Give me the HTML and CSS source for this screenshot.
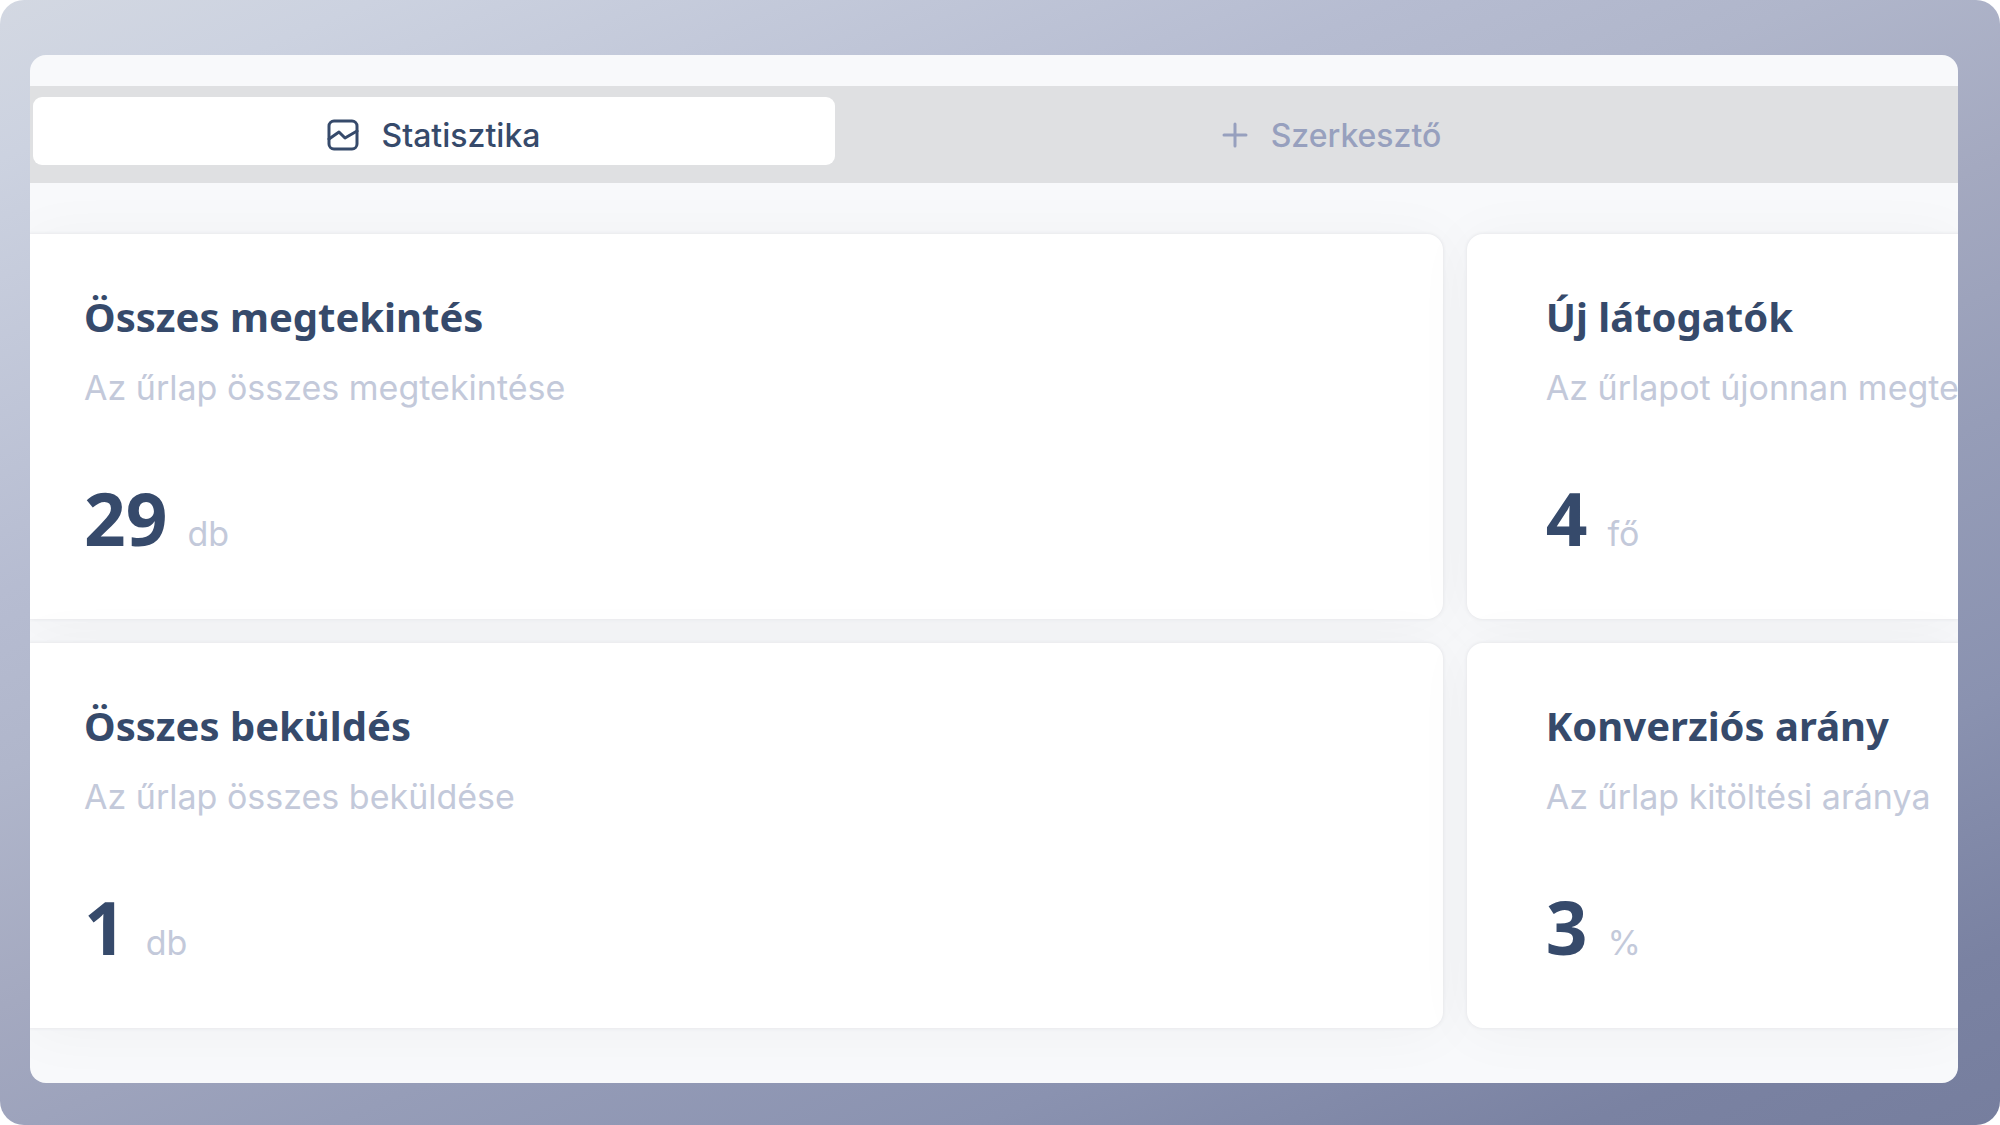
FILE: index.html
```html
<!DOCTYPE html>
<html lang="hu">

<head>
    <meta charset="UTF-8">
    <meta name="viewport" content="width=device-width, initial-scale=1.0">
    <title>Statisztika</title>
    <link rel="stylesheet" href="styles.css">
</head>

<body>
    <div class="frame">
        <main class="panel">
            <nav class="tabs">
                <button class="tab active" type="button">
                    <svg class="icon" viewBox="0 0 32 32" fill="none" stroke="currentColor" stroke-width="3" stroke-linejoin="round" stroke-linecap="round">
                        <rect x="2" y="2" width="28" height="28" rx="5"/>
                        <path d="M2 20l10-7 6 6 12-7"/>
                    </svg>
                    <span>Statisztika</span>
                </button>
                <button class="tab" type="button">
                    <svg class="icon plus" viewBox="0 0 28 28" fill="none" stroke="currentColor" stroke-width="3" stroke-linecap="round">
                        <path d="M14 3v22M3 14h22"/>
                    </svg>
                    <span>Szerkesztő</span>
                </button>
            </nav>

            <div class="cards">
                <section class="card left">
                    <h2>Összes megtekintés</h2>
                    <p class="desc">Az űrlap összes megtekintése</p>
                    <p class="stat"><strong>29</strong><span>db</span></p>
                </section>
                <section class="card right">
                    <h2>Új látogatók</h2>
                    <p class="desc">Az űrlapot újonnan megtekintők</p>
                    <p class="stat"><strong>4</strong><span>fő</span></p>
                </section>
                <section class="card left">
                    <h2>Összes beküldés</h2>
                    <p class="desc">Az űrlap összes beküldése</p>
                    <p class="stat"><strong>1</strong><span>db</span></p>
                </section>
                <section class="card right">
                    <h2>Konverziós arány</h2>
                    <p class="desc">Az űrlap kitöltési aránya</p>
                    <p class="stat"><strong>3</strong><span>%</span></p>
                </section>
            </div>
        </main>
    </div>
</body>

</html>
```

FILE: styles.css
```css
* {
    box-sizing: border-box;
}

body {
    margin: 0;
    background: #fff;
    color: #364a6b;
    font-family: Inter, sans-serif;
}

.frame {
    min-height: 100vh;
    padding: 55px 42px 42px 30px;
    border-radius: 24px;
    background: linear-gradient(157deg, #d3d8e2, #ccd2e0 8%, #b6bcd1 30%, #b0b6cb 39%, #a4a9c0 51%, #969db8 64%, #8a92b0 78%, #7a82a2 91%, #767e9e);
}

.panel {
    overflow: hidden;
    border-radius: 16px;
    background: #f8f9fb;
    padding: 31px 0 55px;
}

.tabs {
    display: grid;
    grid-template-columns: 417fr 516fr 67fr;
    padding: 11px 2px 18px 3px;
    background: #dfe0e2;
}

.tab {
    display: flex;
    align-items: center;
    justify-content: center;
    gap: 22px;
    height: 68px;
    padding: 8px 0 0;
    border: none;
    border-radius: 9px;
    background: none;
    color: #97a0be;
    font-family: inherit;
    font-size: 32px;
    font-weight: 500;
    cursor: pointer;
}

.tab.active {
    background: #fff;
    color: #364a6b;
}

.icon {
    width: 32px;
    height: 32px;
}

.icon.plus {
    width: 28px;
    height: 28px;
}

.cards {
    display: grid;
    grid-template-columns: 742fr 258fr;
    gap: 24px;
    margin-top: 51px;
}

.card {
    min-width: 0;
    padding: 53px 54px 36px;
    background: #fff;
    box-shadow: 0 0 3px 1px #e9eaed, 0 4px 60px rgba(0, 0, 0, 0.04);
    white-space: nowrap;
}

.card.left {
    border-radius: 0 16px 16px 0;
}

.card.right {
    padding-left: 79px;
    border-radius: 16px 0 0 16px;
}

h2 {
    margin: 0;
    font-family: "Noto Sans", sans-serif;
    font-size: 40px;
    font-weight: 700;
    line-height: 60px;
}

.desc {
    margin: 19px 0 0;
    color: #c3c9da;
    font-size: 34px;
    line-height: 44px;
}

.stat {
    display: flex;
    align-items: baseline;
    gap: 20px;
    margin: 59px 0 0;
    line-height: 98px;
}

.stat strong {
    font-family: "Noto Sans", sans-serif;
    font-size: 73px;
}

.stat span {
    color: #c3c9da;
    font-size: 34px;
}
```
